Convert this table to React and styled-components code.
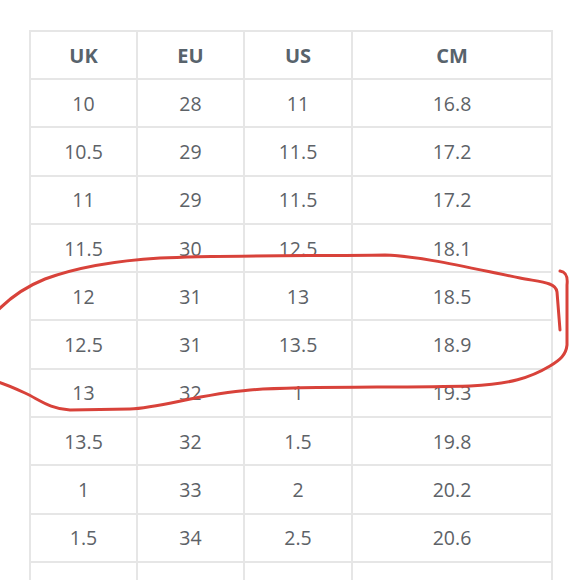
import React from 'react';
import styled, { createGlobalStyle } from 'styled-components';

const GlobalStyle = createGlobalStyle`
  html, body {
    margin: 0;
    padding: 0;
    background: #ffffff;
  }
  body {
    font-family: "Open Sans", "Liberation Sans", sans-serif;
  }
`

const Page = styled.div`
  position: relative;
  width: 580px;
  height: 580px;
  overflow: hidden;
  background: #ffffff;
  padding: 30px 0 0 29px;
  box-sizing: border-box;
`

const SizeTable = styled.table`
  border-collapse: collapse;
  table-layout: fixed;
  width: 522px;
`

const HeadCell = styled.th`
  height: 46px;
  padding: 0;
  border: 2px solid #e6e6e6;
  text-align: center;
  vertical-align: middle;
  font-size: 20px;
  font-weight: 700;
  color: #58636c;
`

const Cell = styled.td`
  height: 46.3px;
  padding: 0;
  border: 2px solid #e6e6e6;
  text-align: center;
  vertical-align: middle;
  font-size: 19.5px;
  font-weight: 400;
  color: #5d6267;
`

const Scribble = styled.svg`
  position: absolute;
  left: 0;
  top: 0;
  pointer-events: none;
`

const columns = [
  { label: 'UK', width: 107 },
  { label: 'EU', width: 107 },
  { label: 'US', width: 108 },
  { label: 'CM', width: 200 },
];

const rows = [
  ['10', '28', '11', '16.8'],
  ['10.5', '29', '11.5', '17.2'],
  ['11', '29', '11.5', '17.2'],
  ['11.5', '30', '12.5', '18.1'],
  ['12', '31', '13', '18.5'],
  ['12.5', '31', '13.5', '18.9'],
  ['13', '32', '1', '19.3'],
  ['13.5', '32', '1.5', '19.8'],
  ['1', '33', '2', '20.2'],
  ['1.5', '34', '2.5', '20.6'],
  ['2', '35', '3', '21.1'],
];

function RedCircle() {
  return (
    <Scribble width="580" height="580" viewBox="0 0 580 580">
      <g fill="none" stroke="#d8423a" strokeWidth="3" strokeLinecap="round" strokeLinejoin="round">
        <path d="M -2 310 C 12 296, 25 287, 45 279 C 75 268, 110 261, 160 258 C 220 255, 320 256, 385 255 C 420 256, 470 268, 520 278 C 540 282, 556 282, 557 292 L 560 330" />
        <path d="M 560 271 C 566 272, 568 276, 567 285 L 567 345 C 566 355, 560 360, 550 366 C 530 378, 510 384, 470 386 C 400 388, 300 386, 250 390 C 200 394, 160 408, 130 409 L 70 410 C 50 409, 40 400, 25 393 C 12 387, 5 384, -2 382" />
      </g>
    </Scribble>
  );
}

export default function App() {
  return (
    <Page>
      <GlobalStyle />
      <SizeTable>
        <colgroup>
          {columns.map(c => <col key={c.label} style={{ width: c.width }} />)}
        </colgroup>
        <thead>
          <tr>
            {columns.map(c => <HeadCell key={c.label}>{c.label}</HeadCell>)}
          </tr>
        </thead>
        <tbody>
          {rows.map((r, i) => (
            <tr key={i}>
              {r.map((v, j) => <Cell key={j}>{v}</Cell>)}
            </tr>
          ))}
        </tbody>
      </SizeTable>
      <RedCircle />
    </Page>
  );
}
